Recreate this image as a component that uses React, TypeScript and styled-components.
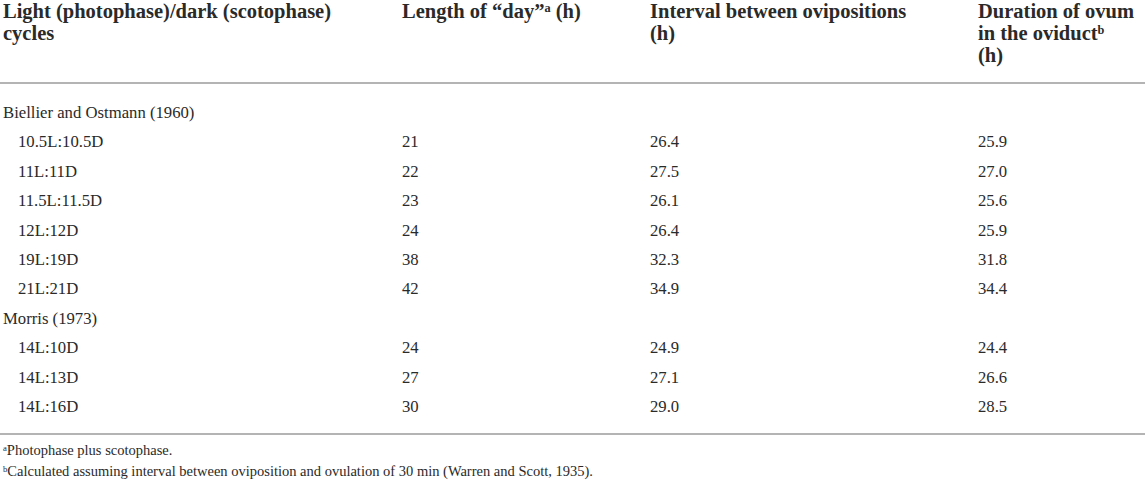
import React from 'react';
import styled, { createGlobalStyle } from 'styled-components';

const GlobalStyle = createGlobalStyle`
	html, body {
		margin: 0;
		padding: 0;
		background: #fff;
	}
	body {
		font-family: 'Liberation Serif', 'Times New Roman', serif;
		color: #2a2a2a;
	}
`;

const Wrapper = styled.div`
	width: 1145px;
`;

const Table = styled.table`
	width: 100%;
	border-collapse: collapse;
	table-layout: fixed;
`;

const HeadCell = styled.th`
	text-align: left;
	vertical-align: top;
	font-weight: bold;
	font-size: 20.5px;
	line-height: 22px;
	padding: 0 3px;
	height: 83px;
	box-sizing: border-box;
	border-bottom: 2px solid #b4b4b4;
	color: #2a2a2a;
	white-space: nowrap;
`;

const Cell = styled.td<{ $indent?: boolean }>`
	font-size: 16.7px;
	line-height: 29.4px;
	padding: 0 3px 0 ${(p) => (p.$indent ? '18px' : '3px')};
	vertical-align: middle;
	white-space: nowrap;
`;

const Spacer = styled.td<{ $h: number }>`
	height: ${(p) => p.$h}px;
	padding: 0;
`;

const LastCell = styled.td`
	height: 12px;
	padding: 0;
	border-bottom: 2px solid #b4b4b4;
`;

const Notes = styled.div`
	padding: 5px 3px 0;
	font-size: 14.5px;
	line-height: 21px;
`;

const Sup = styled.sup`
	font-size: 0.6em;
	line-height: 0;
	vertical-align: 0.45em;
`;

type Row = { group?: string; cycle?: string; day?: string; interval?: string; duration?: string };

const rows: Row[] = [
	{ group: 'Biellier and Ostmann (1960)' },
	{ cycle: '10.5L:10.5D', day: '21', interval: '26.4', duration: '25.9' },
	{ cycle: '11L:11D', day: '22', interval: '27.5', duration: '27.0' },
	{ cycle: '11.5L:11.5D', day: '23', interval: '26.1', duration: '25.6' },
	{ cycle: '12L:12D', day: '24', interval: '26.4', duration: '25.9' },
	{ cycle: '19L:19D', day: '38', interval: '32.3', duration: '31.8' },
	{ cycle: '21L:21D', day: '42', interval: '34.9', duration: '34.4' },
	{ group: 'Morris (1973)' },
	{ cycle: '14L:10D', day: '24', interval: '24.9', duration: '24.4' },
	{ cycle: '14L:13D', day: '27', interval: '27.1', duration: '26.6' },
	{ cycle: '14L:16D', day: '30', interval: '29.0', duration: '28.5' },
];

const App: React.FC = () => {
	return (
		<Wrapper>
			<GlobalStyle />
			<Table>
				<colgroup>
					<col style={{ width: 399 }} />
					<col style={{ width: 248 }} />
					<col style={{ width: 328 }} />
					<col />
				</colgroup>
				<thead>
					<tr>
						<HeadCell>
							Light (photophase)/dark (scotophase)
							<br />
							cycles
						</HeadCell>
						<HeadCell>
							Length of “day”<Sup>a</Sup> (h)
						</HeadCell>
						<HeadCell>
							Interval between ovipositions
							<br />
							(h)
						</HeadCell>
						<HeadCell>
							Duration of ovum
							<br />
							in the oviduct<Sup>b</Sup>
							<br />
							(h)
						</HeadCell>
					</tr>
				</thead>
				<tbody>
					<tr>
						<Spacer $h={14} colSpan={4} />
					</tr>
					{rows.map((r, i) =>
						r.group ? (
							<tr key={i}>
								<Cell colSpan={4}>{r.group}</Cell>
							</tr>
						) : (
							<tr key={i}>
								<Cell $indent>{r.cycle}</Cell>
								<Cell>{r.day}</Cell>
								<Cell>{r.interval}</Cell>
								<Cell>{r.duration}</Cell>
							</tr>
						)
					)}
					<tr>
						<LastCell colSpan={4} />
					</tr>
				</tbody>
			</Table>
			<Notes>
				<div>
					<Sup>a</Sup>Photophase plus scotophase.
				</div>
				<div>
					<Sup>b</Sup>Calculated assuming interval between oviposition and ovulation of 30 min (Warren and Scott, 1935).
				</div>
			</Notes>
		</Wrapper>
	);
};

export default App;
